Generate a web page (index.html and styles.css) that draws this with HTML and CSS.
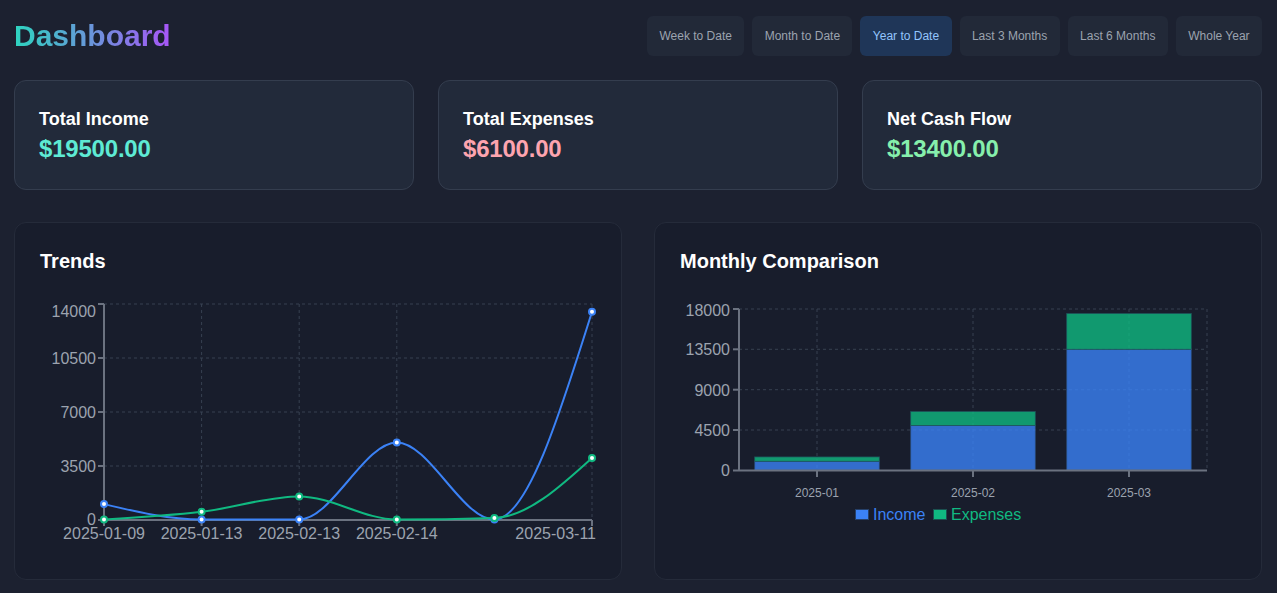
FILE: index.html
```html
<!DOCTYPE html>
<html lang="en">
<head>
<meta charset="utf-8">
<title>Dashboard</title>
<link rel="stylesheet" href="styles.css">
</head>
<body>
<div class="page">
  <header class="header">
    <h1 class="title">Dashboard</h1>
    <nav class="ranges">
      <button class="range">Week to Date</button>
      <button class="range">Month to Date</button>
      <button class="range active">Year to Date</button>
      <button class="range">Last 3 Months</button>
      <button class="range">Last 6 Months</button>
      <button class="range">Whole Year</button>
    </nav>
  </header>

  <section class="stats">
    <div class="stat">
      <h3 class="stat-label">Total Income</h3>
      <p class="stat-value income">$19500.00</p>
    </div>
    <div class="stat">
      <h3 class="stat-label">Total Expenses</h3>
      <p class="stat-value expense">$6100.00</p>
    </div>
    <div class="stat">
      <h3 class="stat-label">Net Cash Flow</h3>
      <p class="stat-value net">$13400.00</p>
    </div>
  </section>

  <section class="charts">
    <div class="chart-card">
      <h2 class="chart-title">Trends</h2>
      <svg class="chart" viewBox="39 291 558 264" width="558" height="264">
        <g class="grid">
          <line x1="104" y1="304" x2="592" y2="304"/>
          <line x1="104" y1="358" x2="592" y2="358"/>
          <line x1="104" y1="412" x2="592" y2="412"/>
          <line x1="104" y1="466" x2="592" y2="466"/>
          <line x1="201.6" y1="304" x2="201.6" y2="520"/>
          <line x1="299.2" y1="304" x2="299.2" y2="520"/>
          <line x1="396.8" y1="304" x2="396.8" y2="520"/>
          <line x1="592" y1="304" x2="592" y2="520"/>
        </g>
        <g class="axis">
          <line x1="104" y1="304" x2="104" y2="520"/>
          <line x1="104" y1="520" x2="592" y2="520"/>
          <line x1="98" y1="304" x2="104" y2="304"/>
          <line x1="98" y1="358" x2="104" y2="358"/>
          <line x1="98" y1="412" x2="104" y2="412"/>
          <line x1="98" y1="466" x2="104" y2="466"/>
          <line x1="98" y1="520" x2="104" y2="520"/>
          <line x1="104" y1="520" x2="104" y2="526"/>
          <line x1="201.6" y1="520" x2="201.6" y2="526"/>
          <line x1="299.2" y1="520" x2="299.2" y2="526"/>
          <line x1="396.8" y1="520" x2="396.8" y2="526"/>
          <line x1="592" y1="520" x2="592" y2="526"/>
        </g>
        <g class="ylabels">
          <text x="96" y="311">14000</text>
          <text x="96" y="358">10500</text>
          <text x="96" y="412">7000</text>
          <text x="96" y="466">3500</text>
          <text x="96" y="519">0</text>
        </g>
        <g class="xlabels">
          <text x="104" y="533">2025-01-09</text>
          <text x="201.6" y="533">2025-01-13</text>
          <text x="299.2" y="533">2025-02-13</text>
          <text x="396.8" y="533">2025-02-14</text>
          <text x="596" y="533" class="end">2025-03-11</text>
        </g>
        <path class="line blue" d="M104,504.1 C136.53,511.8 169.07,519.5 201.6,519.5 C234.13,519.5 266.67,519.5 299.2,519.5 C331.73,519.5 364.27,442.5 396.8,442.5 C429.33,442.5 461.87,519.5 494.4,519.5 C526.93,519.5 559.47,415.6 592,311.7"/>
        <g class="dots blue">
          <circle cx="104" cy="504.1" r="3"/>
          <circle cx="201.6" cy="519.5" r="3"/>
          <circle cx="299.2" cy="519.5" r="3"/>
          <circle cx="396.8" cy="442.5" r="3"/>
          <circle cx="494.4" cy="519.5" r="3"/>
          <circle cx="592" cy="311.7" r="3"/>
        </g>
        <path class="line green" d="M104,519.5 C136.53,517.57 169.07,515.65 201.6,511.8 C234.13,507.95 266.67,496.4 299.2,496.4 C331.73,496.4 364.27,519.5 396.8,519.5 C429.33,519.5 461.87,519.0 494.4,518.0 C526.93,517.0 559.47,487.45 592,457.9"/>
        <g class="dots green">
          <circle cx="104" cy="519.5" r="3"/>
          <circle cx="201.6" cy="511.8" r="3"/>
          <circle cx="299.2" cy="496.4" r="3"/>
          <circle cx="396.8" cy="519.5" r="3"/>
          <circle cx="494.4" cy="518" r="3"/>
          <circle cx="592" cy="457.9" r="3"/>
        </g>
      </svg>
    </div>

    <div class="chart-card">
      <h2 class="chart-title">Monthly Comparison</h2>
      <svg class="chart" viewBox="679 291 558 264" width="558" height="264">
        <g class="grid">
          <line x1="739" y1="309" x2="1207" y2="309"/>
          <line x1="739" y1="349.3" x2="1207" y2="349.3"/>
          <line x1="739" y1="389.7" x2="1207" y2="389.7"/>
          <line x1="739" y1="430" x2="1207" y2="430"/>
          <line x1="817" y1="309" x2="817" y2="470"/>
          <line x1="973" y1="309" x2="973" y2="470"/>
          <line x1="1129" y1="309" x2="1129" y2="470"/>
          <line x1="1207" y1="309" x2="1207" y2="470"/>
        </g>
        <g class="bars">
          <rect class="bar-inc" x="754.6" y="461.3" width="124.8" height="9"/>
          <rect class="bar-exp" x="754.6" y="456.9" width="124.8" height="4.4"/>
          <rect class="bar-inc" x="910.6" y="425.5" width="124.8" height="44.8"/>
          <rect class="bar-exp" x="910.6" y="411.5" width="124.8" height="14"/>
          <rect class="bar-inc" x="1066.6" y="349.3" width="124.8" height="121"/>
          <rect class="bar-exp" x="1066.6" y="313.5" width="124.8" height="35.8"/>
        </g>
        <g class="axis">
          <line x1="739" y1="309" x2="739" y2="471"/>
          <line x1="739" y1="470.5" x2="1207" y2="470.5"/>
          <line x1="733" y1="309" x2="739" y2="309"/>
          <line x1="733" y1="349.3" x2="739" y2="349.3"/>
          <line x1="733" y1="389.7" x2="739" y2="389.7"/>
          <line x1="733" y1="430" x2="739" y2="430"/>
          <line x1="733" y1="470.5" x2="739" y2="470.5"/>
          <line x1="817" y1="470" x2="817" y2="477"/>
          <line x1="973" y1="470" x2="973" y2="477"/>
          <line x1="1129" y1="470" x2="1129" y2="477"/>
        </g>
        <g class="ylabels">
          <text x="730" y="310">18000</text>
          <text x="730" y="349.5">13500</text>
          <text x="730" y="390">9000</text>
          <text x="730" y="430.5">4500</text>
          <text x="730" y="470.5">0</text>
        </g>
        <g class="xlabels small">
          <text x="817" y="493">2025-01</text>
          <text x="973" y="493">2025-02</text>
          <text x="1129" y="493">2025-03</text>
        </g>
        <g class="legend">
          <rect class="leg-inc" x="855.5" y="509.5" width="13" height="10"/>
          <text class="leg-inc-t" x="873" y="514.5">Income</text>
          <rect class="leg-exp" x="933.5" y="509.5" width="13" height="10"/>
          <text class="leg-exp-t" x="951" y="514.5">Expenses</text>
        </g>
      </svg>
    </div>
  </section>
</div>
</body>
</html>
```
FILE: styles.css
```css
* { box-sizing: border-box; }

html, body {
  margin: 0;
  padding: 0;
  background: #1c2130;
  font-family: "Liberation Sans", Arial, sans-serif;
  color: #ffffff;
}

.page {
  padding: 16px 15px 0 14px;
}

.header {
  display: flex;
  justify-content: space-between;
  align-items: center;
  height: 40px;
}

.title {
  margin: 0;
  font-size: 30px;
  font-weight: 700;
  line-height: 34px;
  background: linear-gradient(to right, #2dd4bf, #a855f7);
  -webkit-background-clip: text;
  background-clip: text;
  color: transparent;
}

.ranges {
  display: flex;
  gap: 8px;
}

.range {
  font-family: "Liberation Sans", Arial, sans-serif;
  font-size: 12px;
  line-height: 16px;
  height: 40px;
  padding: 12px 12.4px;
  border: none;
  border-radius: 6px;
  background: #222938;
  color: #9ca3af;
}

.range.active {
  background: #1f3658;
  color: #93c5fd;
}

.stats {
  margin-top: 24px;
  display: grid;
  grid-template-columns: repeat(3, 1fr);
  gap: 24px;
}

.stat {
  height: 110px;
  padding: 24px;
  background: #222a3a;
  border: 1px solid #343d4e;
  border-radius: 12px;
}

.stat-label {
  margin: 0;
  font-size: 18px;
  line-height: 28px;
  font-weight: 700;
  color: #ffffff;
}

.stat-value {
  margin: 0;
  font-size: 24px;
  line-height: 32px;
  font-weight: 700;
  letter-spacing: -0.2px;
}

.stat-value.income { color: #5eead4; }
.stat-value.expense { color: #fda4af; }
.stat-value.net { color: #86efac; }

.charts {
  margin-top: 32px;
  display: grid;
  grid-template-columns: repeat(2, 1fr);
  gap: 32px;
}

.chart-card {
  height: 358px;
  padding: 24px;
  background: #181d2c;
  border: 1px solid #252b3a;
  border-radius: 12px;
}

.chart-title {
  margin: 0 0 16px 1px;
  font-size: 20px;
  line-height: 28px;
  font-weight: 700;
  color: #ffffff;
}

.chart {
  display: block;
  overflow: visible;
  font-family: "Liberation Sans", Arial, sans-serif;
}

.grid line {
  stroke: #374151;
  stroke-width: 1;
  stroke-dasharray: 3 3;
}

.axis line {
  stroke: #6b7280;
  stroke-width: 2;
}

.ylabels text {
  font-size: 16px;
  fill: #9ca3af;
  text-anchor: end;
  dominant-baseline: central;
}

.xlabels text {
  font-size: 16px;
  fill: #9ca3af;
  text-anchor: middle;
  dominant-baseline: central;
}

.xlabels text.end { text-anchor: end; }

.xlabels.small text { font-size: 12px; }

.line {
  fill: none;
  stroke-width: 2;
}
.line.blue { stroke: #3b82f6; }
.line.green { stroke: #10b981; }

.dots circle {
  fill: #ffffff;
  stroke-width: 2;
}
.dots.blue circle { stroke: #3b82f6; }
.dots.green circle { stroke: #10b981; }

.bar-inc {
  fill: rgba(59, 130, 246, 0.8);
  stroke: rgba(40, 70, 110, 0.7);
  stroke-width: 1;
}
.bar-exp {
  fill: rgba(16, 185, 129, 0.8);
  stroke: rgba(30, 80, 90, 0.7);
  stroke-width: 1;
}

.legend text {
  font-size: 16px;
  dominant-baseline: central;
}
.leg-inc { fill: #3b82f6; stroke: #25406a; stroke-width: 1; }
.leg-exp { fill: #10b981; stroke: #1b5150; stroke-width: 1; }
.leg-inc-t { fill: #3b82f6; }
.leg-exp-t { fill: #10b981; }
```
